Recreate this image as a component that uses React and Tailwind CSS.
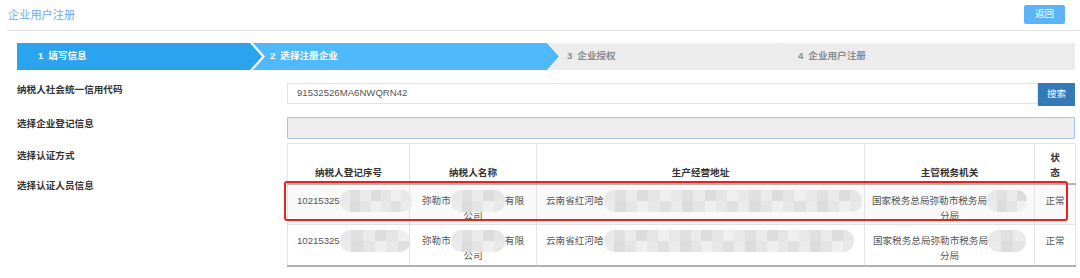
import React from "react";

const font = { fontFamily: '"Liberation Sans", "Noto Sans CJK SC", sans-serif' };

// mosaic blur used to hide sensitive data in the screenshot
function Mosaic({ w, h = 22, cells = ["#e8e8e8", "#e0e0e0", "#ebebeb", "#dcdcdc", "#e5e5e5", "#efefef"] }) {
  const n = Math.max(3, Math.round(w / 11));
  return (
    <span
      className="inline-flex align-middle rounded-[10px] overflow-hidden blur-[0.6px] -my-[4px]"
      style={{ width: w, height: h }}
    >
      {Array.from({ length: n }).map((_, i) => (
        <span key={i} className="flex-1 flex flex-col">
          <span className="flex-1" style={{ background: cells[i % cells.length] }} />
          <span className="flex-1" style={{ background: cells[(i + 2) % cells.length] }} />
        </span>
      ))}
    </span>
  );
}

const steps = [
  { n: 1, label: "填写信息", cls: "w-[245px] pl-[21px] bg-[#2ba3ee] text-white [clip-path:polygon(0_0,calc(100%_-_12px)_0,100%_50%,calc(100%_-_12px)_100%,0_100%)]" },
  { n: 2, label: "选择注册企业", cls: "w-[306px] -ml-[9px] pl-[17px] bg-[#4fb9fb] text-white [clip-path:polygon(0_0,calc(100%_-_12px)_0,100%_50%,calc(100%_-_12px)_100%,0_100%,12px_50%)]" },
  { n: 3, label: "企业授权", cls: "w-[245px] -ml-[11px] pl-[19px] bg-[#ececec] text-[#8a8a8a] [clip-path:polygon(0_0,calc(100%_-_12px)_0,100%_50%,calc(100%_-_12px)_100%,0_100%,12px_50%)]" },
  { n: 4, label: "企业用户注册", cls: "flex-1 -ml-[12px] pl-[17px] bg-[#ececec] text-[#8a8a8a] [clip-path:polygon(0_0,100%_0,100%_100%,0_100%,12px_50%)]" },
];

const rows = [
  { bg: "bg-[#f9f9f9]", m1: 72, m2: 54, m3: 258, m4: 40 },
  { bg: "bg-white", m1: 70, m2: 54, m3: 250, m4: 38 },
];

export default function App() {
  return (
    <div className="w-[1080px] h-[278px] overflow-hidden bg-white" style={font}>
      {/* Header */}
      <div className="ml-[7px] flex items-center justify-between h-[31px] border-b border-[#e5e5e5] pr-[15px]">
        <span className="pl-[1px] text-[11.2px] text-[#6eaaee]">企业用户注册</span>
        <button className="h-[19px] w-[41px] rounded-[2px] bg-[#5cb4f6] text-white text-[9.6px] -mt-[2px]">返回</button>
      </div>

      {/* Steps */}
      <div className="ml-[17px] mr-[5px] mt-[12px] flex h-[27px]">
        {steps.map((s) => (
          <div key={s.n} className={`flex items-center h-full text-[9.6px] font-bold ${s.cls}`}>
            <span className="mr-[5px]">{s.n}</span>
            <span>{s.label}</span>
          </div>
        ))}
      </div>

      {/* Form */}
      <div className="ml-[17px] mr-[5px] mt-[13px] flex">
        <div className="w-[270px] flex flex-col text-[9.6px] font-bold text-[#333]">
          <div className="h-[34px] leading-[14px]">纳税人社会统一信用代码</div>
          <div className="h-[32px] leading-[14px]">选择企业登记信息</div>
          <div className="h-[30px] leading-[14px]">选择认证方式</div>
          <div className="h-[30px] leading-[14px]">选择认证人员信息</div>
        </div>

        <div className="flex-1 flex flex-col">
          <div className="flex items-start h-[23px]">
            <div className="flex-1 h-[21px] border border-[#e2e2e2] flex items-center pl-[9px] text-[9.6px] text-[#555]">
              91532526MA6NWQRN42
            </div>
            <button className="w-[37px] h-[23px] bg-[#337ab7] text-white text-[9.6px]">搜索</button>
          </div>

          <div className="mt-[11px] h-[22px] border border-[#a9c4ec] bg-[#eeeeee] rounded-[1px]" />

          <div className="relative mt-[4px] w-[788px]">
            <table className="w-full table-fixed border-collapse text-[9.6px] leading-[15px]">
              <colgroup>
                <col className="w-[122px]" />
                <col className="w-[127px]" />
                <col className="w-[328px]" />
                <col className="w-[170px]" />
                <col className="w-[41px]" />
              </colgroup>
              <thead>
                <tr className="h-[40px] text-[#333] font-bold">
                  <th className="border border-[#e3e3e3] border-b-2 border-b-[#b4b4b4] align-bottom pb-[3px]">纳税人登记序号</th>
                  <th className="border border-[#e3e3e3] border-b-2 border-b-[#b4b4b4] align-bottom pb-[3px]">纳税人名称</th>
                  <th className="border border-[#e3e3e3] border-b-2 border-b-[#b4b4b4] align-bottom pb-[3px]">生产经营地址</th>
                  <th className="border border-[#e3e3e3] border-b-2 border-b-[#b4b4b4] align-bottom pb-[3px]">主管税务机关</th>
                  <th className="border border-[#e3e3e3] border-b-2 border-b-[#b4b4b4] align-bottom pb-[3px]">
                    <div className="w-[10px] mx-auto">状态</div>
                  </th>
                </tr>
              </thead>
              <tbody className="text-[#555]">
                {rows.map((r, i) => (
                  <tr key={i} className={`h-[41px] ${r.bg} ${i === 1 ? "border-b-2 border-b-[#b0b0b0]" : ""}`}>
                    <td className="border-x border-t border-[#e3e3e3] align-top pt-[8px] pl-[9px] whitespace-nowrap overflow-visible">
                      10215325<Mosaic w={r.m1} />
                    </td>
                    <td className="border-x border-t border-[#e3e3e3] align-top pt-[8px] px-[8px] text-center whitespace-nowrap">
                      弥勒市<Mosaic w={r.m2} />有限
                      <br />
                      公司
                    </td>
                    <td className="border-x border-t border-[#e3e3e3] align-top pt-[8px] pl-[9px] whitespace-nowrap overflow-visible">
                      云南省红河哈<Mosaic w={r.m3} />
                    </td>
                    <td className="border-x border-t border-[#e3e3e3] align-top pt-[8px] px-[6px] text-center whitespace-nowrap">
                      国家税务总局弥勒市税务局<Mosaic w={r.m4} />
                      <br />
                      分局
                    </td>
                    <td className="border-x border-t border-[#e3e3e3] align-top pt-[8px] text-center">正常</td>
                  </tr>
                ))}
              </tbody>
            </table>

            {/* red highlight around first row */}
            <div className="absolute left-[-3px] top-[38px] w-[784px] h-[40px] border-2 border-[#e8211d] rounded-[3px] pointer-events-none" />
          </div>
        </div>
      </div>
    </div>
  );
}
